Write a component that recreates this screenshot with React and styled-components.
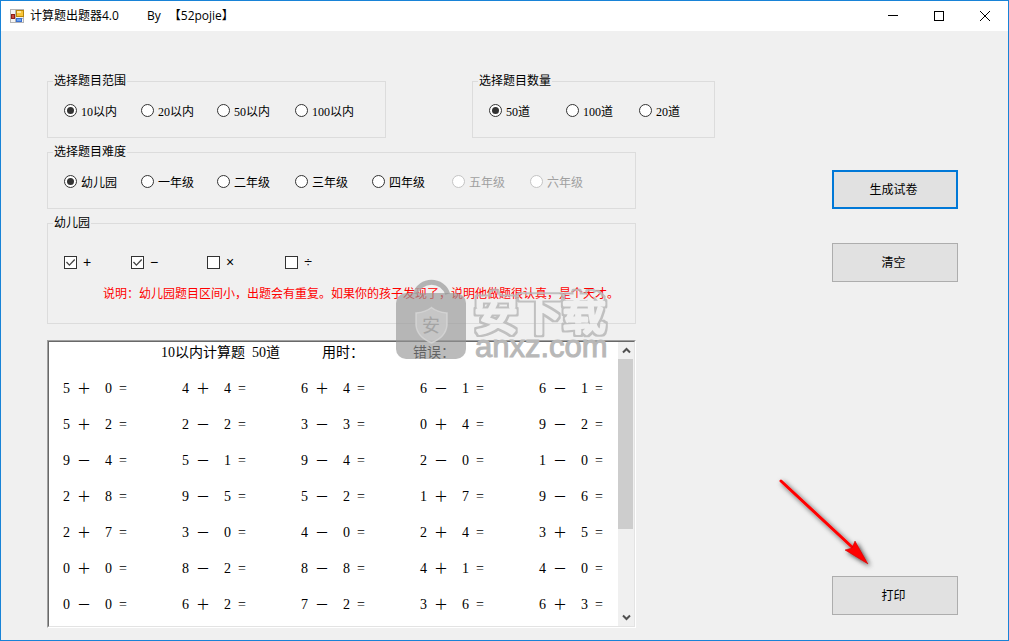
import React from "react";
import styled, { createGlobalStyle, css } from "styled-components";

const GlobalStyle = createGlobalStyle`
  *, *::before, *::after { box-sizing: border-box; }
  body {
    margin: 0;
    color: #000;
    font: 12px/18px "Liberation Serif", "Noto Sans CJK SC", sans-serif;
  }
  button, input, textarea { margin: 0; font: inherit; color: inherit; }
`;

const Window = styled.div`
  position: relative;
  display: flex;
  flex-direction: column;
  height: 100vh;
  min-height: 520px;
  min-width: 920px;
  border: 1px solid #1883d7;
  background: #f0f0f0;
  overflow: hidden;
`;

const TitleBar = styled.header`
  display: flex;
  align-items: center;
  height: 30px;
  flex: none;
  padding-left: 9px;
  background: #fff;
  font-family: "Open Sans", "Noto Sans CJK SC", sans-serif;
`;

const AppIcon = styled.svg`
  width: 14px;
  height: 14px;
  margin-right: 6px;
`;

const Title = styled.h1`
  display: flex;
  flex: 1;
  margin: 0;
  font: inherit;
`;

const TitleName = styled.span`
  width: 117px;
`;

const TitleAuthor = styled.span`
  display: flex;
  gap: 8px;
`;

const CaptionButton = styled.button`
  display: grid;
  place-items: center;
  width: 46px;
  height: 30px;
  padding: 0;
  border: 0;
  background: transparent;
`;

const Body = styled.main`
  flex: 1;
  min-height: 0;
  display: flex;
  gap: 117px;
  padding: 43px 50px 12px 46px;
`;

const Content = styled.div`
  flex: 1;
  min-width: 0;
  display: flex;
  flex-direction: column;
`;

const TopRow = styled.div`
  display: flex;
  justify-content: space-between;
  gap: 16px;
`;

const Narrow = styled.div`
  flex: 1;
  min-height: 0;
  display: flex;
  flex-direction: column;
  gap: 7px;
  margin: 7px 79px 0 0;
`;

const Group = styled.fieldset`
  margin: 0;
  min-width: ${(p) => p.$width || "0"};
  border: 1px solid #dcdcdc;
  padding: ${(p) => (p.$tall ? "23px 0 20px 0" : "13px 0 17px 0")};
`;

const Legend = styled.legend`
  height: 15px;
  margin-left: 5px;
  padding: 0 1px;
  line-height: 15px;
`;

const Options = styled.div`
  display: grid;
  grid-template-columns: ${(p) => p.$columns};
  padding-left: 16px;
`;

const Option = styled.label`
  display: flex;
  align-items: flex-start;
  gap: 4px;
  height: 18px;
  line-height: 20px;
  white-space: nowrap;
  color: ${(p) => (p.$disabled ? "#a0a0a0" : "#000")};
`;

const mark = css`
  appearance: none;
  flex: none;
  width: 13px;
  height: 13px;
  margin-top: 2px;
  border: 1px solid #333;
  background: #fff;
`;

const Radio = styled.input.attrs({ type: "radio" })`
  ${mark}
  display: grid;
  place-items: center;
  border-radius: 50%;
  &:checked::before {
    content: "";
    width: 7px;
    height: 7px;
    border-radius: 50%;
    background: #333;
  }
  &:disabled { border-color: #c4c4c4; }
`;

const Check = styled.input.attrs({ type: "checkbox" })`
  ${mark}
  &:checked::before {
    content: "";
    display: block;
    width: 11px;
    height: 11px;
    background: #444;
    clip-path: polygon(9% 50%, 18% 42%, 40% 65%, 84% 18%, 93% 28%, 40% 82%);
  }
`;

const Sign = styled.span`
  width: 12px;
  font: 14px/16px "Liberation Sans", sans-serif;
  text-align: center;
`;

const Note = styled.p`
  margin: 13px 0 0 55px;
  color: #f00;
  white-space: nowrap;
`;

const Paper = styled.div`
  flex: 1;
  min-height: 0;
  display: flex;
  margin-top: 9px;
  border: 1px solid;
  border-color: #a0a0a0 #fff #fff #a0a0a0;
`;

const PaperInner = styled.div`
  flex: 1;
  display: flex;
  min-width: 0;
  border: 1px solid;
  border-color: #696969 #e3e3e3 #e3e3e3 #696969;
  background: #fff;
`;

const PaperText = styled.textarea`
  flex: 1;
  min-width: 0;
  padding: 2px 0 0 14px;
  border: 0;
  outline: 0;
  resize: none;
  overflow: hidden;
  background: transparent;
  font-size: 14px;
  line-height: 18px;
  white-space: pre;
  tab-size: 119px;
`;

const ScrollBar = styled.div`
  display: flex;
  flex-direction: column;
  width: 16px;
  background: #f0f0f0;
`;

const ScrollButton = styled.button`
  display: grid;
  place-items: center;
  height: 17px;
  padding: 0;
  border: 0;
  background: transparent;
`;

const ScrollTrack = styled.div`
  flex: 1;
`;

const ScrollThumb = styled.div`
  width: 15px;
  height: 68%;
  background: #cdcdcd;
`;

const Actions = styled.aside`
  display: flex;
  flex-direction: column;
  gap: 34px;
  width: 126px;
  padding: 96px 0 13px;
`;

const ActionButton = styled.button`
  height: 39px;
  padding: 0 3px 0 0;
  border: ${(p) => (p.$primary ? "2px solid #0078d7" : "1px solid #adadad")};
  background: #e1e1e1;
`;

const PrintArea = styled.div`
  position: relative;
  display: grid;
  margin-top: auto;
`;

const Arrow = styled.svg`
  position: absolute;
  left: -62px;
  bottom: 39px;
  width: 110px;
  height: 106px;
  pointer-events: none;
`;

const Watermark = styled.svg`
  position: absolute;
  left: 395px;
  top: 275px;
  width: 220px;
  height: 92px;
  pointer-events: none;
`;

const ShieldText = styled.text`
  font: 400 18px "Noto Sans CJK SC", sans-serif;
  fill: #a4a4a4;
  text-anchor: middle;
`;

const MarkName = styled.text`
  font: 400 44px "Noto Sans CJK SC", sans-serif;
  fill: #b4b4b4;
  stroke: #b4b4b4;
  stroke-width: 3px;
  stroke-linejoin: round;
`;

const MarkSite = styled.text`
  font: 31px "Liberation Sans", sans-serif;
  fill: #b8b8b8;
  stroke: #b8b8b8;
  stroke-width: 1px;
`;

const problems = [
  ["5+0", "4+4", "6+4", "6-1", "6-1"],
  ["5+2", "2-2", "3-3", "0+4", "9-2"],
  ["9-4", "5-1", "9-4", "2-0", "1-0"],
  ["2+8", "9-5", "5-2", "1+7", "9-6"],
  ["2+7", "3-0", "4-0", "2+4", "3+5"],
  ["0+0", "8-2", "8-8", "4+1", "4-0"],
  ["0-0", "6+2", "7-2", "3+6", "6+3"],
];

const WIDE = "\u3000";

const formatProblem = ([a, op, b]) =>
  `${a}  ${op === "+" ? "＋" : "－"}${WIDE}${b}  =`;

const paperText = [
  `${WIDE.repeat(7)}10以内计算题  50道${WIDE.repeat(3)}用时：${WIDE.repeat(3)}  错误：`.replace("  错误", "    错误"),
  ...problems.map((row) => row.map(formatProblem).join("\t")),
].join("\n\n");

function RadioGroup({ title, name, items, columns, width }) {
  return (
    <Group $width={width}>
      <Legend>{title}</Legend>
      <Options $columns={columns}>
        {items.map((item, i) => {
          const disabled = item.startsWith("!");
          return (
            <Option key={item} $disabled={disabled}>
              <Radio name={name} defaultChecked={i === 0} disabled={disabled} />
              {item.replace("!", "")}
            </Option>
          );
        })}
      </Options>
    </Group>
  );
}

function Chevron({ down }) {
  return (
    <svg width="9" height="7" viewBox="0 0 9 7">
      <path
        d={down ? "M1 1.5 4.5 5 8 1.5" : "M1 5.5 4.5 2 8 5.5"}
        fill="none"
        stroke="#505050"
        strokeWidth="2"
      />
    </svg>
  );
}

export default function App() {
  return (
    <>
      <GlobalStyle />
      <Window>
        <TitleBar>
          <AppIcon viewBox="0 0 14 14">
            <rect x="0.5" y="0.5" width="13" height="13" fill="#f4f4f4" stroke="#b4b4b4" />
            <path d="M5.5 1v12M1 9.5h12" stroke="#b4b4b4" />
            <rect x="6.5" y="1.5" width="7" height="6" fill="#f8c53a" stroke="#b8860b" />
            <rect x="7" y="2" width="4" height="2" fill="#ffe69a" />
            <rect x="1.5" y="5.5" width="3" height="4" fill="#c8463c" stroke="#8e1f18" />
            <rect x="6.5" y="9.5" width="5" height="3" fill="#6ba4f0" stroke="#3a6fd0" />
          </AppIcon>
          <Title>
            <TitleName>计算题出题器4.0</TitleName>
            <TitleAuthor>
              <span>By</span>
              <span>【52pojie】</span>
            </TitleAuthor>
          </Title>
          <CaptionButton aria-label="最小化">
            <svg width="10" height="10"><path d="M0 4.5h10" stroke="#000" /></svg>
          </CaptionButton>
          <CaptionButton aria-label="最大化">
            <svg width="10" height="10"><rect x="0.5" y="0.5" width="9" height="9" fill="none" stroke="#000" /></svg>
          </CaptionButton>
          <CaptionButton aria-label="关闭">
            <svg width="10" height="10"><path d="M0 0 10 10M10 0 0 10" stroke="#000" /></svg>
          </CaptionButton>
        </TitleBar>

        <Body>
          <Content>
            <TopRow>
              <RadioGroup
                title="选择题目范围"
                name="range"
                width="339px"
                columns="77px 76px 78px 1fr"
                items={["10以内", "20以内", "50以内", "100以内"]}
              />
              <RadioGroup
                title="选择题目数量"
                name="count"
                width="243px"
                columns="77px 73px 1fr"
                items={["50道", "100道", "20道"]}
              />
            </TopRow>
            <Narrow>
              <RadioGroup
                title="选择题目难度"
                name="grade"
                columns="77px 76px 78px 77px 80px 78px 1fr"
                items={["幼儿园", "一年级", "二年级", "三年级", "四年级", "!五年级", "!六年级"]}
              />
              <Group $tall>
                <Legend>幼儿园</Legend>
                <Options $columns="67px 76px 78px 1fr">
                  {["+", "−", "×", "÷"].map((sign, i) => (
                    <Option key={sign}>
                      <Check defaultChecked={i < 2} />
                      <Sign>{sign}</Sign>
                    </Option>
                  ))}
                </Options>
                <Note>说明：幼儿园题目区间小，出题会有重复。如果你的孩子发现了，说明他做题很认真，是个天才。</Note>
              </Group>
              <Paper>
                <PaperInner>
                  <PaperText aria-label="试卷" spellCheck={false} defaultValue={paperText} />
                  <ScrollBar>
                    <ScrollButton aria-label="向上滚动"><Chevron /></ScrollButton>
                    <ScrollTrack><ScrollThumb /></ScrollTrack>
                    <ScrollButton aria-label="向下滚动"><Chevron down /></ScrollButton>
                  </ScrollBar>
                </PaperInner>
              </Paper>
            </Narrow>
          </Content>

          <Actions>
            <ActionButton $primary>生成试卷</ActionButton>
            <ActionButton>清空</ActionButton>
            <PrintArea>
              <ActionButton>打印</ActionButton>
              <Arrow viewBox="0 0 110 106">
                <defs>
                  <filter id="arrowShadow" x="-20%" y="-20%" width="150%" height="150%">
                    <feDropShadow dx="2" dy="2" stdDeviation="2.5" floodColor="#000" floodOpacity="0.75" />
                  </filter>
                </defs>
                <g filter="url(#arrowShadow)">
                  <path d="M11 11 82 77" stroke="#f00" strokeWidth="3" strokeLinecap="round" />
                  <path d="M98 94 75 80 82 78 85 71Z" fill="#f00" stroke="#b00" strokeWidth="0.5" />
                </g>
              </Arrow>
            </PrintArea>
          </Actions>
        </Body>

        <Watermark viewBox="0 0 220 92">
          <defs>
            <filter id="outline" x="-5%" y="-10%" width="110%" height="120%">
              <feMorphology in="SourceAlpha" operator="dilate" radius="2" result="wide" />
              <feFlood floodColor="#b8b8b8" floodOpacity="0.85" />
              <feComposite in2="wide" operator="in" />
              <feComposite in2="SourceAlpha" operator="out" />
            </filter>
          </defs>
          <path d="M19.3 18A17 17 0 0 1 51.7 18" fill="none" stroke="#a8a8a8" strokeOpacity="0.85" strokeWidth="5" />
          <rect x="0" y="17" width="70" height="66" rx="10" fill="#969696" fillOpacity="0.65" />
          <path d="M20 37Q30 36 35.5 31.5 41 36 51 37V49Q50 61 35.5 67 21 61 20 49Z" fill="#cdcdcd" fillOpacity="0.7" stroke="#dadada" strokeOpacity="0.7" strokeWidth="1.5" />
          <ShieldText x="35" y="56">安</ShieldText>
          <g filter="url(#outline)">
            <MarkName x="78" y="54">安下载</MarkName>
          </g>
          <MarkSite x="79" y="81">anxz.com</MarkSite>
        </Watermark>
      </Window>
    </>
  );
}
